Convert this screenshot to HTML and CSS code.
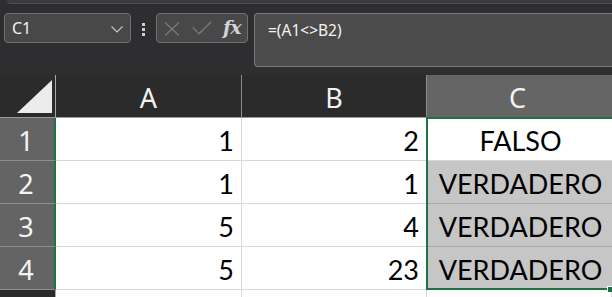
FILE: index.html
```html
<!DOCTYPE html>
<html lang="es">
<head>
<meta charset="utf-8">
<title>Excel</title>
<link rel="stylesheet" href="styles.css">
</head>
<body>
<div class="topstrip"></div>
<div class="toolbar">
  <div class="namebox">
    <span class="nb-text">C1</span>
    <svg class="chev" width="12" height="7" viewBox="0 0 12 7"><path d="M0.5 0.5 L6 6 L11.5 0.5" fill="none" stroke="#c8c8c8" stroke-width="1.1"/></svg>
  </div>
  <div class="dots"><i></i><i></i><i></i></div>
  <div class="fxbox">
    <svg class="ic-x" width="16" height="14" viewBox="0 0 16 14"><path d="M1 0.5 L15 13.5 M15 0.5 L1 13.5" stroke="#7c7c7c" stroke-width="1.2" fill="none"/></svg>
    <svg class="ic-ok" width="20" height="14" viewBox="0 0 20 14"><path d="M0.8 6.5 L7 12.8 L19.2 0.8" stroke="#7c7c7c" stroke-width="1.2" fill="none"/></svg>
    <span class="fx">fx</span>
  </div>
  <div class="formula">=(A1&lt;&gt;B2)</div>
</div>
<div class="sheet">
  <div class="grid">
    <div class="corner"><svg width="55" height="42" viewBox="0 0 55 42"><polygon points="52,5 52,38 17,38" fill="#ececec"/></svg></div>
    <div class="colh">A</div>
    <div class="colh">B</div>
    <div class="colh sel">C</div>

    <div class="rowh">1</div>
    <div class="cell num">1</div>
    <div class="cell num">2</div>
    <div class="cell bool active">FALSO</div>

    <div class="rowh">2</div>
    <div class="cell num">1</div>
    <div class="cell num">1</div>
    <div class="cell bool hl">VERDADERO</div>

    <div class="rowh">3</div>
    <div class="cell num">5</div>
    <div class="cell num">4</div>
    <div class="cell bool hl">VERDADERO</div>

    <div class="rowh">4</div>
    <div class="cell num">5</div>
    <div class="cell num">23</div>
    <div class="cell bool hl">VERDADERO</div>

    <div class="rowh plain"></div>
    <div class="cell"></div>
    <div class="cell"></div>
    <div class="cell"></div>
  </div>
  <div class="selection"><span class="handle"></span></div>
</div>
</body>
</html>
```
FILE: styles.css
```css
html, body {
  margin: 0;
  padding: 0;
}
body {
  width: 612px;
  height: 297px;
  overflow: hidden;
  background: #2e2e30;
  font-family: "Noto Sans", "Open Sans", sans-serif;
}
.topstrip {
  height: 3px;
  margin-left: 7px;
  background: #3b3b3d;
  border-bottom: 1px solid #505052;
  border-bottom-left-radius: 4px;
}
.toolbar {
  height: 71px;
  display: flex;
  align-items: flex-start;
  padding-top: 9px;
  padding-left: 4px;
  box-sizing: border-box;
}
.namebox {
  width: 127px;
  height: 30px;
  box-sizing: border-box;
  background: #484848;
  border: 1px solid #717171;
  border-radius: 4px;
  display: flex;
  align-items: center;
  justify-content: space-between;
  padding: 0 7px 0 7px;
  color: #f2f2f2;
  font-size: 16px;
}
.nb-text {
  margin-top: -1px;
}
.chev {
  margin-top: 2px;
}
.dots {
  width: 4px;
  margin-left: 11px;
  margin-top: 10px;
  display: flex;
  flex-direction: column;
  gap: 2px;
}
.dots i {
  display: block;
  width: 3px;
  height: 3px;
  background: #cfcfcf;
}
.fxbox {
  margin-left: 10px;
  width: 92px;
  height: 30px;
  box-sizing: border-box;
  background: #484848;
  border: 1px solid #717171;
  border-radius: 4px;
  display: flex;
  align-items: center;
  padding-left: 7px;
}
.ic-x {
  margin-top: 1px;
}
.ic-ok {
  margin-left: 12px;
}
.fx {
  margin-left: 11px;
  font-family: "DejaVu Serif", "Liberation Serif", serif;
  font-style: italic;
  font-weight: bold;
  font-size: 19px;
  color: #d4d4d4;
  letter-spacing: -1px;
  margin-top: -3px;
}
.formula {
  margin-left: 6px;
  flex: 1;
  height: 54px;
  box-sizing: border-box;
  background: #4b4b4b;
  border: 1px solid #7a7a7a;
  border-right: none;
  border-radius: 4px 0 0 4px;
  color: #f4f4f4;
  font-size: 15.5px;
  padding: 5px 0 0 13px;
}
.sheet {
  position: relative;
  background: #2b2b2b;
}
.grid {
  display: grid;
  grid-template-columns: 56px 186px 185px 1fr;
  grid-template-rows: 43px 43px 43px 43px 43px 20px;
}
.corner {
  background: #2b2b2b;
  border-right: 1px solid #a8a8a8;
  border-bottom: 1px solid #9a9a9a;
  box-sizing: border-box;
}
.corner svg {
  display: block;
}
.colh {
  background: #2b2b2b;
  color: #f2f2f2;
  font-size: 27px;
  display: flex;
  align-items: center;
  justify-content: center;
  border-right: 1px solid #8c8c8c;
  border-bottom: 1px solid #9a9a9a;
  box-sizing: border-box;
  padding-top: 2px;
}
.colh.sel {
  background: #656565;
  border-right: none;
  padding-right: 4px;
}
.rowh {
  background: #646464;
  color: #f4f4f4;
  font-size: 27px;
  display: flex;
  align-items: center;
  justify-content: center;
  box-sizing: border-box;
  border-right: 2px solid #1f7145;
  border-bottom: 1px solid #8e8e8e;
  padding-top: 2px;
  padding-right: 2px;
}
.rowh.plain {
  background: #2b2b2b;
  border-right: 1px solid #a8a8a8;
}
.cell {
  background: #ffffff;
  color: #000;
  font-family: "Lato", "Liberation Sans", sans-serif;
  font-size: 27px;
  box-sizing: border-box;
  border-right: 1px solid #d9d9d9;
  border-bottom: 1px solid #d9d9d9;
  display: flex;
  align-items: center;
  padding-top: 3px;
}
.cell.num {
  justify-content: flex-end;
  padding-right: 7px;
}
.cell.bool {
  justify-content: center;
  border-right: none;
  padding-left: 2px;
}
.cell.hl {
  background: #c6c6c6;
  border-bottom-color: #ababab;
}
.selection {
  position: absolute;
  left: 426px;
  top: 42px;
  width: 186px;
  height: 173px;
  box-sizing: border-box;
  border: 2px solid #1f7145;
  border-right: none;
  pointer-events: none;
}
.handle {
  position: absolute;
  right: 0;
  bottom: -4px;
  width: 4px;
  height: 5px;
  background: #1f7145;
  border-left: 1px solid #fff;
  border-top: 1px solid #fff;
}
```
